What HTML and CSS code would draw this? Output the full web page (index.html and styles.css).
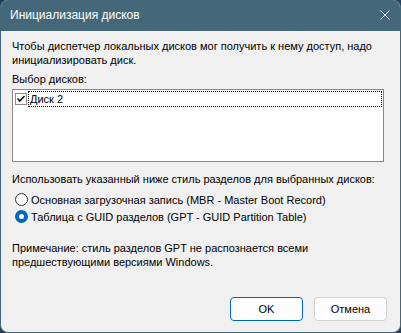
FILE: index.html
```html
<!DOCTYPE html>
<html lang="ru">
<head>
  <meta charset="UTF-8">
  <title>Инициализация дисков</title>
  <link rel="stylesheet" href="styles.css">
</head>
<body>
  <div class="window">
    <div class="titlebar">
      <span class="title">Инициализация дисков</span>
      <svg class="close" width="10" height="10" viewBox="0 0 10 10" aria-label="Закрыть">
        <path d="M0.5 0.5 L9.5 9.5 M9.5 0.5 L0.5 9.5" stroke="#fff" stroke-width="1" fill="none"/>
      </svg>
    </div>
    <div class="content">
      <p class="intro">Чтобы диспетчер локальных дисков мог получить к нему доступ, надо<br>инициализировать диск.</p>
      <div class="label">Выбор дисков:</div>
      <div class="listbox">
        <div class="item">
          <svg class="check" width="12" height="12" viewBox="0 0 12 12">
            <rect x="0.5" y="0.5" width="11" height="11" fill="#fff" stroke="#8c8c8c"/>
            <path d="M2.5 5.5 L4.8 8 L9.5 3" stroke="#111" stroke-width="1.6" fill="none"/>
          </svg>
          <span class="item-text">Диск 2</span>
        </div>
      </div>
      <p class="style-label">Использовать указанный ниже стиль разделов для выбранных дисков:</p>
      <div class="radio"><span class="dot"></span>Основная загрузочная запись (MBR - Master Boot Record)</div>
      <div class="radio"><span class="dot checked"></span>Таблица с GUID разделов (GPT - GUID Partition Table)</div>
      <p class="note">Примечание: стиль разделов GPT не распознается всеми<br>предшествующими версиями Windows.</p>
      <div class="buttons">
        <button class="btn primary">OK</button>
        <button class="btn">Отмена</button>
      </div>
    </div>
  </div>
</body>
</html>
```

FILE: styles.css
```css
body { margin: 0; background: #24405e; font-family: 'Liberation Sans', Arial, sans-serif; font-size: 11px; color: #000; }
.window { width: 401px; height: 333px; box-sizing: border-box; border: 1px solid #44687a; border-top: none; border-radius: 8px; background: #f0f0f0; overflow: hidden; display: flex; flex-direction: column; }
.titlebar { height: 31px; background: #44687a; color: #fff; display: flex; align-items: center; justify-content: space-between; padding: 0 10px 0 9px; flex-shrink: 0; }
.title { font-size: 12px; padding-bottom: 1px; }
.close { margin-top: -1px; }
.content { padding: 8px 16px 0 11px; display: flex; flex-direction: column; flex: 1; }
p { margin: 0; line-height: 14px; }
.label { line-height: 14px; margin-top: 5px; }
.listbox { margin-top: 3px; height: 73px; box-sizing: border-box; border: 1px solid #828790; background: #fff; padding: 1px 1px 0 2px; }
.item { display: flex; align-items: center; gap: 1px; }
.check { flex-shrink: 0; }
.item-text { flex: 1; line-height: 14px; border: 1px dotted #000; padding-left: 1px; }
.style-label { margin-top: 10px; }
.radio { display: flex; align-items: center; height: 17px; line-height: 17px; padding-left: 3px; gap: 3px; }
.radio:first-of-type { margin-top: 6px; }
.style-label + .radio { margin-top: 6px; }
.dot { width: 13px; height: 13px; box-sizing: border-box; border: 1px solid #333; border-radius: 50%; background: #fff; margin-top: -2px; }
.dot.checked { border: 4px solid #0067c0; background: #fff; }
.note { margin-top: 15px; }
.buttons { display: flex; justify-content: flex-end; gap: 11px; margin-top: 28px; margin-right: -3px; }
.btn { width: 73px; height: 24px; font-family: 'Liberation Sans', Arial, sans-serif; font-size: 11px; color: #000; background: #fdfdfd; border: 1px solid #d0d0d0; border-radius: 4px; padding: 0; }
.btn.primary { border-color: #0067c0; }
```
